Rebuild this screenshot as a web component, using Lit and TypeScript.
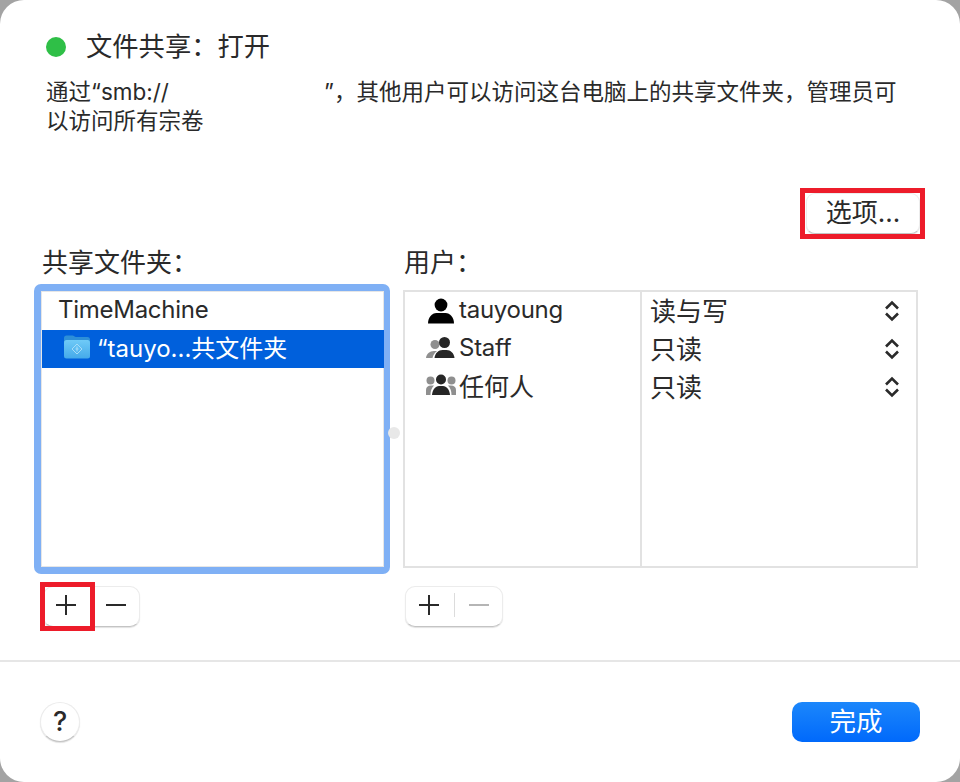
import {LitElement, html, css, svg} from 'lit';
import {customElement} from 'lit/decorators.js';

// full-width punctuation, the Latin forms would come out of Inter
const COLON = '\uFF1A';
const COMMA = '\uFF0C';

const personIcon = html`<svg width="32" height="28" viewBox="0 0 32 28">
  <circle cx="16" cy="9" r="6.400" fill="#000"/>
  <path d="M3 27.500c0-6 4-10.500 8.500-10.500h9c4.500 0 8.500 4.500 8.500 10.500z" fill="#000"/>
</svg>`;

const groupIcon = html`<svg width="32" height="28" viewBox="0 0 32 28">
  <circle cx="10" cy="11.500" r="4.500" fill="#8f8f8f"/>
  <path d="M1 25c.5-4 3.500-7 8-7h3c-2.500 2-4 4-4.500 7z" fill="#8f8f8f"/>
  <circle cx="19.500" cy="9.500" r="5.500" fill="#262626"/>
  <path d="M9.500 25c.5-5 4-8 8-8h4c4 0 7.500 3 8 8z" fill="#262626"/>
</svg>`;

const everyoneIcon = html`<svg width="32" height="28" viewBox="0 0 32 28">
  <circle cx="5.500" cy="9.500" r="4" fill="#8f8f8f"/>
  <circle cx="26.500" cy="9.500" r="4" fill="#8f8f8f"/>
  <path d="M1 24v-5c0-3 2-4.500 5-4.500h3c-2.500 2.500-3.500 5.500-3.500 9.500z" fill="#8f8f8f"/>
  <path d="M31 24v-5c0-3-2-4.500-5-4.500h-3c2.500 2.500 3.500 5.500 3.500 9.500z" fill="#8f8f8f"/>
  <circle cx="16" cy="8.500" r="5" fill="#262626"/>
  <path d="M7 24c.5-5.500 3.500-9 7-9h4c3.500 0 6.500 3.500 7 9z" fill="#262626"/>
</svg>`;

const chevrons = html`<svg width="16" height="22" viewBox="0 0 16 22">
  <path d="M2 8.500 8 2.500l6 6M2 13.500l6 6 6-6" fill="none" stroke="#2a2a2a" stroke-width="2.600"/>
</svg>`;

const folderIcon = html`<svg width="28" height="26" viewBox="0 0 28 26">
  <defs>
    <linearGradient id="fold" x1="0" y1="0" x2="0" y2="1">
      <stop offset="0" stop-color="#6fcaf7"/>
      <stop offset="1" stop-color="#45aaea"/>
    </linearGradient>
  </defs>
  <path d="M1 4c0-1.500 1-2.500 2.500-2.500h6c1.500 0 2 1.500 3.500 1.500h11.500C26 3 27 4 27 5.500V8H1z" fill="#2d8fd8"/>
  <rect x="1" y="6" width="26" height="18.500" rx="2.500" fill="url(#fold)"/>
  <path d="M14 10l5 5-5 5-5-5z" fill="none" stroke="#a5dcf8" stroke-width="1"/>
  <path d="M14 12.500v5M12.500 15h3" fill="none" stroke="#a5dcf8" stroke-width="1"/>
</svg>`;

const plusIcon = svg`<path d="M11 1v20M1 11h20" fill="none" stroke="currentColor" stroke-width="2"/>`;
const minusIcon = svg`<path d="M1 11h20" fill="none" stroke="currentColor" stroke-width="2"/>`;

const users = [
  {icon: personIcon, label: 'tauyoung', cls: 'latin', access: '读与写'},
  {icon: groupIcon, label: 'Staff', cls: 'latin', access: '只读'},
  {icon: everyoneIcon, label: '任何人', cls: 'cjk', access: '只读'},
];

@customElement('app-root')
export class AppRoot extends LitElement {
  static styles = css`
    :host {
      display: block;
      width: 960px;
      height: 782px;
      background: #a3a3a3;
      font-family: 'Inter', 'Noto Sans CJK SC', sans-serif;
      color: #2a2a2a;
    }
    .sheet {
      height: 782px;
      box-sizing: border-box;
      background: #fff;
      border-radius: 24px;
      display: flex;
      flex-direction: column;
    }
    .status {
      display: flex;
      align-items: center;
      padding: 29px 0 0 46px;
      height: 35px;
      font-size: 26.300px;
      line-height: 35px;
    }
    .dot {
      width: 20px;
      height: 20px;
      border-radius: 50%;
      background: #2fbf47;
      margin-right: 20px;
    }
    .desc {
      margin: 13px 60px 0 46px;
      font-size: 22.500px;
      line-height: 29px;
    }
    .gap {
      display: inline-block;
      width: 155px;
    }
    .options-row {
      display: flex;
      justify-content: flex-end;
      padding-right: 40px;
      margin-top: 58px;
    }
    .push {
      position: relative;
      background: #fff;
      border: 1px solid #ececec;
      border-bottom-color: #c4c4c4;
      box-shadow: 0 1px 1px rgba(0, 0, 0, 0.12);
      box-sizing: border-box;
      font: inherit;
      color: inherit;
    }
    .options {
      width: 114px;
      height: 41px;
      border-radius: 9px;
      font-size: 26px;
      line-height: 36px;
      padding: 0 0 2px;
    }
    .mark {
      position: absolute;
      box-sizing: border-box;
      border: 5px solid #ed1c2a;
      pointer-events: none;
    }
    .options .mark {
      left: -7px;
      top: -6px;
      width: 125px;
      height: 51px;
    }
    .panels {
      display: grid;
      grid-template-columns: 369px 515px;
      margin: 12px 0 0 34px;
      position: relative;
    }
    .label {
      font-size: 26px;
      line-height: 33px;
      height: 38px;
    }
    .left .label {
      padding-left: 8px;
    }
    .right .label {
      padding-left: 1px;
    }
    .ring {
      box-sizing: border-box;
      width: 356px;
      height: 290px;
      border: 7px solid #7fb0f5;
      border-right-width: 6px;
      border-radius: 7px;
      background: #fff;
      box-shadow: inset 0 0 0 1px #e6e6e6;
      padding-top: 1px;
      font-size: 24px;
    }
    .latin {
      letter-spacing: -0.270px;
    }
    .cjk {
      font-size: 25px;
    }
    .row {
      box-sizing: border-box;
      height: 38px;
      display: flex;
      align-items: center;
      padding: 0 0 3px 17px;
    }
    .row.selected {
      background: #0060dc;
      color: #fff;
      padding: 0 0 5px 21px;
      gap: 6px;
      margin-left: 1px;
    }
    .table {
      box-sizing: border-box;
      width: 515px;
      height: 278px;
      margin-top: 6px;
      border: 2px solid #e2e2e2;
      display: grid;
      grid-template-columns: 237px 1fr;
      font-size: 24px;
    }
    .users {
      margin-top: -1px;
      border-right: 2px solid #e2e2e2;
    }
    .user {
      height: 37.500px;
      display: flex;
      align-items: center;
      padding-left: 20px;
      gap: 2px;
    }
    .user svg {
      flex: none;
    }
    .access {
      height: 38px;
      display: flex;
      align-items: center;
      justify-content: space-between;
      padding: 0 16px 0 8px;
      font-size: 26px;
    }
    .access span {
      line-height: 36px;
      padding-top: 2px;
    }
    .tools {
      margin: 12px 0 0 9px;
      width: 97px;
      height: 41px;
      border-radius: 10px;
      display: flex;
      align-items: center;
      justify-content: space-between;
      padding: 0 12px 3px 11px;
    }
    .right .tools {
      margin: 18px 0 0 2px;
      width: 98px;
      padding-left: 12px;
    }
    .tools svg {
      display: block;
      width: 22px;
      height: 22px;
    }
    .tool.off {
      color: #b5b5b5;
    }
    .sep {
      width: 1px;
      height: 24px;
      background: #dcdcdc;
    }
    .tools .mark {
      left: -4px;
      top: -5px;
      width: 55px;
      height: 49px;
    }
    .handle {
      position: absolute;
      left: 354px;
      top: 181px;
      width: 12px;
      height: 12px;
      border-radius: 50%;
      background: #e8e8e8;
    }
    .rule {
      height: 2px;
      background: #e6e6e6;
      margin-top: 33px;
    }
    .footer {
      display: flex;
      align-items: center;
      justify-content: space-between;
      padding: 40px 40px 0;
    }
    .help {
      width: 40px;
      height: 40px;
      border-radius: 50%;
      padding: 0;
      font-size: 27px;
      font-weight: 500;
      line-height: 36px;
    }
    .done {
      width: 128px;
      height: 40px;
      border: none;
      border-radius: 10px;
      background: linear-gradient(#1c87fb, #0069fb);
      color: #fff;
      font: inherit;
      font-size: 26.500px;
      line-height: 36px;
      padding: 0 0 2px;
    }
  `;

  render() {
    return html`
      <div class="sheet">
        <div class="status"><span class="dot"></span>文件共享${COLON}打开</div>
        <div class="desc">通过“smb://<span class="gap"></span>”${COMMA}其他用户可以访问这台电脑上的共享文件夹${COMMA}管理员可以访问所有宗卷</div>
        <div class="options-row">
          <button class="push options">选项...<span class="mark"></span></button>
        </div>
        <div class="panels">
          <div class="left">
            <div class="label">共享文件夹${COLON}</div>
            <div class="ring">
              <div class="row latin">TimeMachine</div>
              <div class="row selected">${folderIcon}<span>“tauyo...共文件夹</span></div>
            </div>
            <div class="push tools">
              <span class="tool"><svg viewBox="0 0 22 22">${plusIcon}</svg></span>
              <span class="tool"><svg viewBox="0 0 22 22">${minusIcon}</svg></span>
              <span class="mark"></span>
            </div>
          </div>
          <div class="right">
            <div class="label">用户${COLON}</div>
            <div class="table">
              <div class="users">
                ${users.map(
                  (u) => html`<div class="user">${u.icon}<span class=${u.cls}>${u.label}</span></div>`
                )}
              </div>
              <div>
                ${users.map(
                  (u) => html`<div class="access"><span>${u.access}</span>${chevrons}</div>`
                )}
              </div>
            </div>
            <div class="push tools">
              <span class="tool"><svg viewBox="0 0 22 22">${plusIcon}</svg></span>
              <span class="sep"></span>
              <span class="tool off"><svg viewBox="0 0 22 22">${minusIcon}</svg></span>
            </div>
          </div>
          <span class="handle"></span>
        </div>
        <div class="rule"></div>
        <div class="footer">
          <button class="push help">?</button>
          <button class="done">完成</button>
        </div>
      </div>
    `;
  }
}
